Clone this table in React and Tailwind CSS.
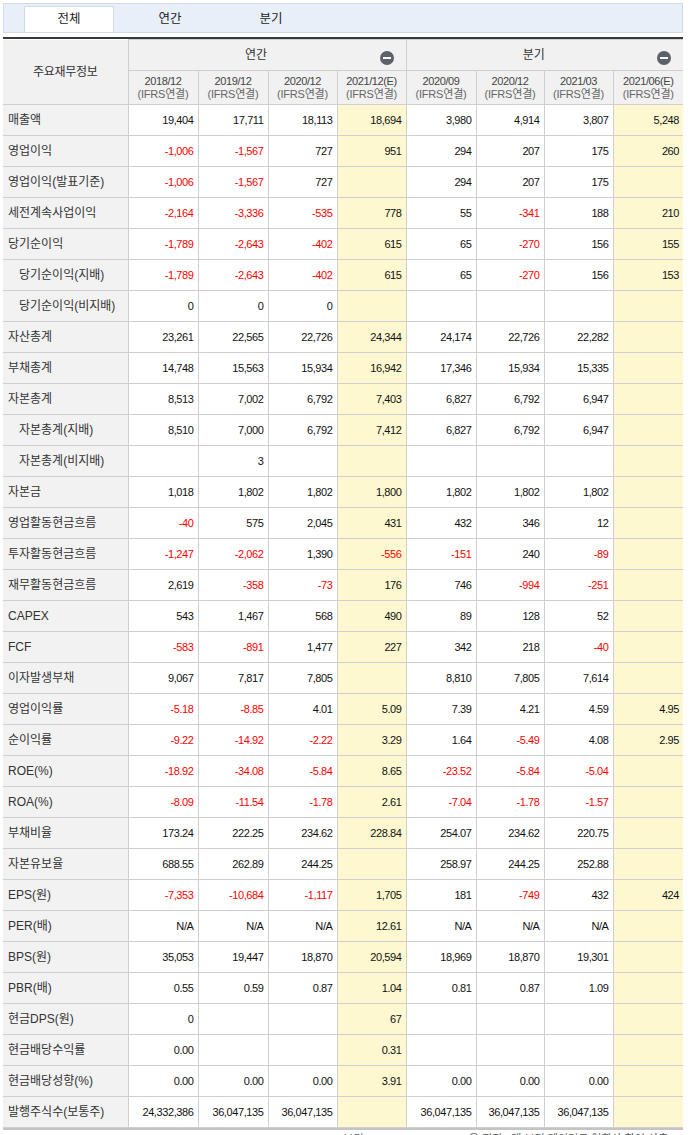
const YEARS = ['2018/12', '2019/12', '2020/12', '2021/12(E)', '2020/09', '2020/12', '2021/03', '2021/06(E)']
const WIDTHS = ['w-[70px]', 'w-[70px]', 'w-[69px]', 'w-[69px]', 'w-[70px]', 'w-[68px]', 'w-[69px]', 'w-[70px]']

const ROWS = [
    ['매출액', 0, ['19,404', '17,711', '18,113', '18,694', '3,980', '4,914', '3,807', '5,248']],
    ['영업이익', 0, ['-1,006', '-1,567', '727', '951', '294', '207', '175', '260']],
    ['영업이익(발표기준)', 0, ['-1,006', '-1,567', '727', '', '294', '207', '175', '']],
    ['세전계속사업이익', 0, ['-2,164', '-3,336', '-535', '778', '55', '-341', '188', '210']],
    ['당기순이익', 0, ['-1,789', '-2,643', '-402', '615', '65', '-270', '156', '155']],
    ['당기순이익(지배)', 1, ['-1,789', '-2,643', '-402', '615', '65', '-270', '156', '153']],
    ['당기순이익(비지배)', 1, ['0', '0', '0', '', '', '', '', '']],
    ['자산총계', 0, ['23,261', '22,565', '22,726', '24,344', '24,174', '22,726', '22,282', '']],
    ['부채총계', 0, ['14,748', '15,563', '15,934', '16,942', '17,346', '15,934', '15,335', '']],
    ['자본총계', 0, ['8,513', '7,002', '6,792', '7,403', '6,827', '6,792', '6,947', '']],
    ['자본총계(지배)', 1, ['8,510', '7,000', '6,792', '7,412', '6,827', '6,792', '6,947', '']],
    ['자본총계(비지배)', 1, ['', '3', '', '', '', '', '', '']],
    ['자본금', 0, ['1,018', '1,802', '1,802', '1,800', '1,802', '1,802', '1,802', '']],
    ['영업활동현금흐름', 0, ['-40', '575', '2,045', '431', '432', '346', '12', '']],
    ['투자활동현금흐름', 0, ['-1,247', '-2,062', '1,390', '-556', '-151', '240', '-89', '']],
    ['재무활동현금흐름', 0, ['2,619', '-358', '-73', '176', '746', '-994', '-251', '']],
    ['CAPEX', 0, ['543', '1,467', '568', '490', '89', '128', '52', '']],
    ['FCF', 0, ['-583', '-891', '1,477', '227', '342', '218', '-40', '']],
    ['이자발생부채', 0, ['9,067', '7,817', '7,805', '', '8,810', '7,805', '7,614', '']],
    ['영업이익률', 0, ['-5.18', '-8.85', '4.01', '5.09', '7.39', '4.21', '4.59', '4.95']],
    ['순이익률', 0, ['-9.22', '-14.92', '-2.22', '3.29', '1.64', '-5.49', '4.08', '2.95']],
    ['ROE(%)', 0, ['-18.92', '-34.08', '-5.84', '8.65', '-23.52', '-5.84', '-5.04', '']],
    ['ROA(%)', 0, ['-8.09', '-11.54', '-1.78', '2.61', '-7.04', '-1.78', '-1.57', '']],
    ['부채비율', 0, ['173.24', '222.25', '234.62', '228.84', '254.07', '234.62', '220.75', '']],
    ['자본유보율', 0, ['688.55', '262.89', '244.25', '', '258.97', '244.25', '252.88', '']],
    ['EPS(원)', 0, ['-7,353', '-10,684', '-1,117', '1,705', '181', '-749', '432', '424']],
    ['PER(배)', 0, ['N/A', 'N/A', 'N/A', '12.61', 'N/A', 'N/A', 'N/A', '']],
    ['BPS(원)', 0, ['35,053', '19,447', '18,870', '20,594', '18,969', '18,870', '19,301', '']],
    ['PBR(배)', 0, ['0.55', '0.59', '0.87', '1.04', '0.81', '0.87', '1.09', '']],
    ['현금DPS(원)', 0, ['0', '', '', '67', '', '', '', '']],
    ['현금배당수익률', 0, ['0.00', '', '', '0.31', '', '', '', '']],
    ['현금배당성향(%)', 0, ['0.00', '0.00', '0.00', '3.91', '0.00', '0.00', '0.00', '']],
    ['발행주식수(보통주)', 0, ['24,332,386', '36,047,135', '36,047,135', '', '36,047,135', '36,047,135', '36,047,135', '']],
]

const Minus = () => (
    <span className="flex items-center justify-center w-[14px] h-[14px] rounded-full bg-[#5c616c] shrink-0">
        <span className="block w-[8px] h-[2px] bg-white" />
    </span>
)

const GroupHead = ({ label, span }) => (
    <th colSpan={span} className="h-[31px] p-0 border border-[#cfcfcf] border-r-0 bg-[#f1f1f1] font-normal">
        <div className="flex items-center h-full pr-[12px]">
            <span className="flex-1 text-center text-[12px] text-[#333] pl-[4px]">{label}</span>
            <span className="self-end mb-[5px]"><Minus /></span>
        </div>
    </th>
)

const App = () => {
    return (
        <div className="w-[690px] bg-white pt-[3px] px-[3px] overflow-hidden font-['Liberation_Sans','Noto_Sans_CJK_KR',sans-serif] text-[#222]">
            <div className="w-[680px] h-[30px] bg-[#e9eff8] border border-[#d3dbe8] flex items-end pl-[20px] gap-[11px]">
                <div className="w-[90px] h-[26px] bg-white border border-b-0 border-[#d3dbe8] flex items-center justify-center text-[12.5px] text-[#222]">전체</div>
                <div className="w-[90px] h-[26px] flex items-center justify-center text-[12.5px] text-[#222]">연간</div>
                <div className="w-[90px] h-[26px] flex items-center justify-center text-[12.5px] text-[#222]">분기</div>
            </div>

            <div className="mt-[4px] w-[680px] h-[2px] bg-[#3a3a3a]" />

            <table className="w-[680px] table-fixed border-collapse">
                <colgroup>
                    <col className="w-[125px]" />
                    {WIDTHS.map((w, i) => <col key={i} className={w} />)}
                </colgroup>
                <thead>
                    <tr>
                        <th rowSpan={2} className="p-0 border border-l-0 border-t-0 border-[#cfcfcf] bg-[#f1f1f1] font-normal text-[12px] text-[#333] tracking-[-0.3px]">주요재무정보</th>
                        <GroupHead label="연간" span={4} />
                        <GroupHead label="분기" span={4} />
                    </tr>
                    <tr>
                        {YEARS.map((y, i) => (
                            <th key={i} className="h-[34px] p-0 border border-[#cfcfcf] border-r-0 bg-[#f1f1f1] font-normal text-[11px] leading-[13px] text-[#444]">
                                <div className="tracking-[-0.4px]">{y}</div>
                                <div className="text-[#666] tracking-[-0.2px]">(IFRS연결)</div>
                            </th>
                        ))}
                    </tr>
                </thead>
                <tbody>
                    {ROWS.map(([label, indent, vals], r) => (
                        <tr key={r}>
                            <td className={`h-[31px] p-0 border border-l-0 border-[#cfcfcf] bg-[#f2f2f2] text-[12px] text-[#333] whitespace-nowrap ${indent ? 'pl-[16px]' : 'pl-[5px]'}`}>{label}</td>
                            {vals.map((v, c) => (
                                <td key={c} className={`h-[31px] p-0 pr-[4px] border border-r-0 border-[#cfcfcf] text-right text-[11px] tracking-[-0.4px] ${c === 3 || c === 7 ? 'bg-[#fdf8cf]' : 'bg-white'} ${v.startsWith('-') ? 'text-[#f00]' : 'text-[#111]'}`}>{v}</td>
                            ))}
                        </tr>
                    ))}
                </tbody>
            </table>

            <div className="w-[680px] h-[2px] bg-[#c4c4c4]" />
            <p className="w-[680px] pl-[333px] pt-[2px] text-left text-[11px] leading-[14px] text-[#555] whitespace-nowrap">* 분기 ROE/ROA/PER/PBR은 직전 4개 분기 데이터로 연환산 하여 산출</p>
        </div>
    )
}

export default App
